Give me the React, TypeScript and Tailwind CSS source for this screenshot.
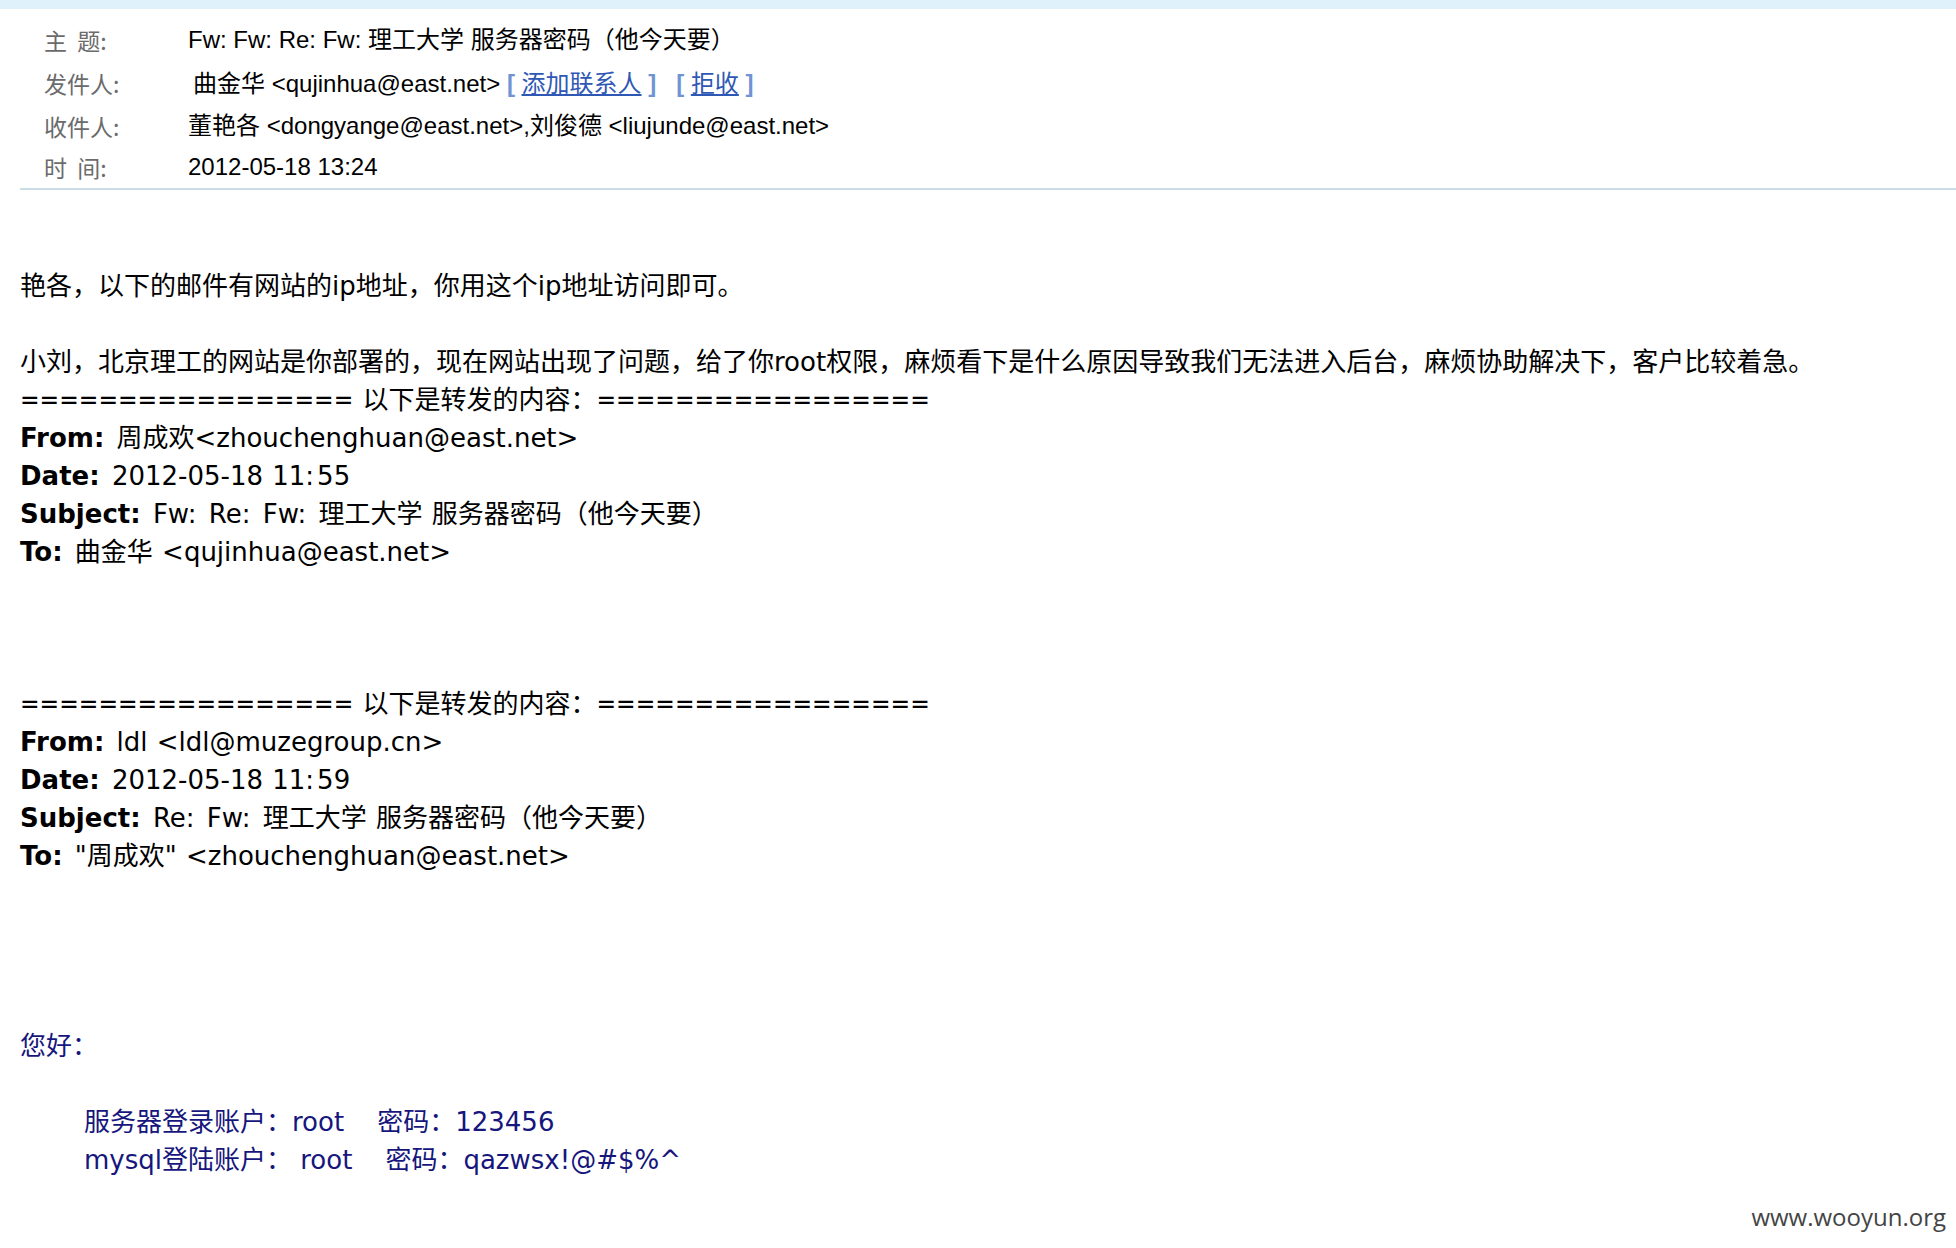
import { Fragment } from "react";

// Verdana-ish colons: a little wider than DejaVu's
function wide(text: string) {
  const parts = text.split(":");
  return parts.map((p, i) => (
    <Fragment key={i}>
      {p}
      {i < parts.length - 1 && <span className="pr-[3px]">:</span>}
    </Fragment>
  ));
}

export default function App() {
  const header = [
    { label: "主  题:", h: "h-[44px]" },
    { label: "发件人:", h: "h-[43px]" },
    { label: "收件人:", h: "h-[42px]" },
    { label: "时  间:", h: "h-[40px]" },
  ];

  const forwards = [
    {
      from: "周成欢<zhouchenghuan@east.net>",
      date: "2012-05-18 11:55",
      subject: "Fw: Re: Fw: 理工大学 服务器密码（他今天要）",
      to: "曲金华 <qujinhua@east.net>",
    },
    {
      from: "ldl <ldl@muzegroup.cn>",
      date: "2012-05-18 11:59",
      subject: "Re: Fw: 理工大学 服务器密码（他今天要）",
      to: "\"周成欢\" <zhouchenghuan@east.net>",
    },
  ];

  const values = [
    <span>Fw: Fw: Re: Fw: 理工大学 服务器密码（他今天要）</span>,
    <span className="pl-[5px]">
      曲金华 &lt;qujinhua@east.net&gt;
      <span className="text-[#6f93d3] font-bold"> [ </span>
      <span className="text-[#2f58b4] underline">添加联系人</span>
      <span className="text-[#6f93d3] font-bold"> ]&nbsp;&nbsp; [ </span>
      <span className="text-[#2f58b4] underline">拒收</span>
      <span className="text-[#6f93d3] font-bold"> ]</span>
    </span>,
    <span>董艳各 &lt;dongyange@east.net&gt;,刘俊德 &lt;liujunde@east.net&gt;</span>,
    <span>2012-05-18 13:24</span>,
  ];

  const eq = "=================";
  const Sep = () => (
    <p>
      <span className="font-['DejaVu_Sans_Condensed',sans-serif]">{eq}</span> 以下是转发的内容：
      <span className="font-['DejaVu_Sans_Condensed',sans-serif]">{eq}</span>
    </p>
  );

  return (
    <div className="relative min-h-[1248px] w-full bg-white overflow-hidden">
      <div className="h-[9px] bg-[#dff1fb]" />

      <div className="ml-[20px] border-b-2 border-[#c9dce7] pt-[9px] pb-[1px] pl-[24px]">
        {header.map((row, i) => (
          <div key={i} className={`flex items-center ${row.h}`}>
            <div className="w-[144px] text-[23px] text-[#6b6b6b] whitespace-pre font-['Noto_Sans_CJK_SC',sans-serif]">
              {row.label}
            </div>
            <div className="text-[24px] text-black font-['Liberation_Sans','Noto_Sans_CJK_SC',sans-serif] whitespace-nowrap">
              {values[i]}
            </div>
          </div>
        ))}
      </div>

      <div className="pl-[20px] pt-[77px] text-[26px] leading-[38px] text-black font-['DejaVu_Sans','Noto_Sans_CJK_SC',sans-serif] whitespace-nowrap">
        <p>艳各，以下的邮件有网站的ip地址，你用这个ip地址访问即可。</p>
        <div className="h-[38px]" />
        <p>小刘，北京理工的网站是你部署的，现在网站出现了问题，给了你root权限，麻烦看下是什么原因导致我们无法进入后台，麻烦协助解决下，客户比较着急。</p>

        {forwards.map((f, i) => (
          <div key={i} className="[word-spacing:1px]">
            {i > 0 && <div className="h-[114px]" />}
            <Sep />
            <p><b>From<span className="pr-[3px]">:</span></b> {wide(f.from)}</p>
            <p><b>Date<span className="pr-[3px]">:</span></b> {wide(f.date)}</p>
            <p><b>Subject<span className="pr-[3px]">:</span></b> {wide(f.subject)}</p>
            <p><b>To<span className="pr-[3px]">:</span></b> {wide(f.to)}</p>
          </div>
        ))}

        <div className="h-[152px]" />
        <div className="text-[#16167c]">
          <p>您好：</p>
          <div className="h-[38px]" />
          <div className="pl-[64px] whitespace-pre">
            <p>服务器登录账户：root    密码：123456</p>
            <p>mysql登陆账户： root    密码：qazwsx!@#$%^</p>
          </div>
        </div>
      </div>

      <div className="absolute right-[10px] bottom-[13px] text-[24px] text-[#444] font-['Open_Sans',sans-serif]">
        www.wooyun.org
      </div>
    </div>
  );
}
